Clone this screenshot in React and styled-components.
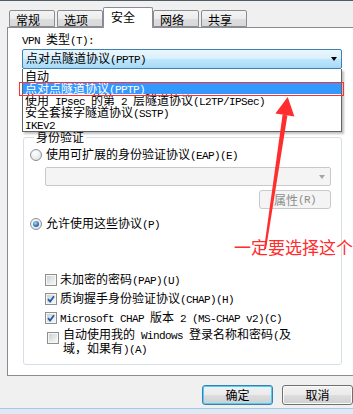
import React from "react";
import styled, { createGlobalStyle } from "styled-components";

const GlobalStyle = createGlobalStyle`
  html, body {
    margin: 0;
    padding: 0;
    overflow: hidden;
    background: #f0f0f0;
  }
  body {
    font-family: "Noto Sans CJK SC", "Liberation Sans", sans-serif;
    font-size: 12px;
    color: #000;
  }
`;

const Latin = styled.span`
  font-family: "Liberation Mono", "DejaVu Sans Mono", monospace;
  font-size: 11px;
  letter-spacing: -0.6px;
`;

// latin runs are narrow in the original bitmap font, so give them a mono face
const t = (s) =>
  s
    .split(/([\x20-\x7e]+)/)
    .filter(Boolean)
    .map((part, i) =>
      /^[\x20-\x7e]+$/.test(part) ? <Latin key={i}>{part}</Latin> : part
    );

const Window = styled.div`
  position: relative;
  width: 362px;
  height: 414px;
  box-sizing: border-box;
  border-top: 1px solid #4f5b66;
  background: #f0f0f0;
  display: flex;
  flex-direction: column;
`;

const TabRow = styled.div`
  display: flex;
  align-items: flex-end;
  gap: 2px;
  height: 26px;
  padding-left: 9px;
  position: relative;
  z-index: 1;
`;

const Tab = styled.div`
  box-sizing: border-box;
  width: ${(p) => (p.$active ? 50 : 46)}px;
  height: ${(p) => (p.$active ? 21 : 17)}px;
  margin: ${(p) => (p.$active ? "0 -2px -1px" : "0")};
  padding: ${(p) => (p.$active ? "3px 0 0 7px" : "3px 0 0 6px")};
  line-height: 12px;
  border: 1px solid #898c95;
  border-bottom: ${(p) => (p.$active ? "none" : "1px solid #898c95")};
  border-radius: 2px 2px 0 0;
  background: ${(p) =>
    p.$active ? "#fff" : "linear-gradient(#f4f4f4, #ececec 50%, #dddddd 51%, #d9d9d9)"};
`;

const Panel = styled.div`
  margin-left: 7px;
  height: 349px;
  box-sizing: border-box;
  border: 1px solid #898c95;
  background: #fff;
  padding: 5px 0 0 14px;
`;

const Label = styled.div`
  line-height: 12px;
  height: 12px;
`;

const ComboWrap = styled.div`
  position: relative;
  width: 320px;
  margin-top: 4px;
`;

const Combo = styled.div`
  box-sizing: border-box;
  height: 20px;
  border: 1px solid #3c7fb1;
  border-radius: 2px;
  background: linear-gradient(#eaf6fd, #d9f0fc 48%, #bee6fd 52%, #a7d9f5);
  display: flex;
  align-items: center;
  justify-content: space-between;
  padding: 0 4px 0 3px;
  line-height: 12px;
`;

const Arrow = styled.span`
  width: 0;
  height: 0;
  border-left: 3.5px solid transparent;
  border-right: 3.5px solid transparent;
  border-top: 4px solid ${(p) => (p.$disabled ? "#a5a5a5" : "#000")};
`;

const DropList = styled.div`
  position: absolute;
  top: 20px;
  left: 0;
  width: 320px;
  box-sizing: border-box;
  border: 1px solid #646464;
  border-top: none;
  background: #fff;
  padding: 1px 0;
  box-shadow: 2px 2px 2px rgba(0, 0, 0, 0.25);
  z-index: 2;
`;

const DropItem = styled.div`
  height: 12px;
  line-height: 12px;
  padding-left: 2px;
  white-space: nowrap;
  background: ${(p) => (p.$selected ? "#3399ff" : "transparent")};
  color: ${(p) => (p.$selected ? "#fff" : "#000")};
`;

const Group = styled.fieldset`
  margin: 61px 0 0 1px;
  width: 319px;
  box-sizing: border-box;
  border: 1px solid #d5dfe5;
  border-radius: 3px;
  padding: 4px 0 8px 6px;
  display: flex;
  flex-direction: column;
`;

const Legend = styled.legend`
  margin-left: 4px;
  padding: 0 2px;
  line-height: 14px;
  font-size: 12px;
`;

const Row = styled.label`
  display: flex;
  align-items: center;
  gap: ${(p) => (p.$gap ? p.$gap : 4)}px;
  height: 14px;
  line-height: 12px;
  margin-top: ${(p) => p.$top || 0}px;
  margin-left: ${(p) => p.$indent || 0}px;
  white-space: nowrap;
`;

const Radio = styled.span`
  position: relative;
  flex: none;
  width: 12px;
  height: 12px;
  box-sizing: border-box;
  border-radius: 50%;
  border: 1px solid #8c9096;
  background: radial-gradient(circle at 40% 35%, #ffffff 0%, #ececec 55%, #cfd1d4 100%);
  &::after {
    content: "";
    display: ${(p) => (p.$checked ? "block" : "none")};
    position: absolute;
    left: 2px;
    top: 2px;
    width: 6px;
    height: 6px;
    border-radius: 50%;
    background: radial-gradient(circle at 40% 35%, #a6d8fb, #2a6fb8 60%, #17457c);
  }
`;

const Box = styled.span`
  flex: none;
  width: 12px;
  height: 12px;
  box-sizing: border-box;
  border: 1px solid #8f8f8f;
  box-shadow: inset 0 0 0 1px #f6f6f6;
  background: linear-gradient(135deg, #c9cbce, #eeeeee 70%, #f8f8f8);
  display: flex;
  align-items: center;
  justify-content: center;
`;

const SubBlock = styled.div`
  display: flex;
  flex-direction: column;
  margin: 5px 10px 0 15px;
`;

const DisabledCombo = styled.div`
  box-sizing: border-box;
  height: 19px;
  border: 1px solid #c7c9cc;
  border-radius: 2px;
  background: #f4f4f4;
  display: flex;
  align-items: center;
  justify-content: flex-end;
  padding-right: 5px;
`;

const DisabledButton = styled.div`
  align-self: flex-end;
  margin-top: 4px;
  width: 72px;
  height: 19px;
  box-sizing: border-box;
  border: 1px solid #c7c9cc;
  border-radius: 3px;
  background: #f4f4f4;
  color: #8d8d8d;
  display: flex;
  align-items: center;
  justify-content: center;
  line-height: 12px;
`;

const TwoLine = styled.div`
  display: flex;
  gap: 4px;
  margin: 3px 0 0 17px;
  line-height: 12px;
`;

const TwoLineBox = styled(Box)`
  margin-top: 4px;
`;

const Buttons = styled.div`
  display: flex;
  justify-content: flex-end;
  gap: 9px;
  padding-right: 9px;
  margin-top: 9px;
`;

const Button = styled.div`
  width: 71px;
  height: 20px;
  box-sizing: border-box;
  border: 1px solid ${(p) => (p.$default ? "#3c7fb1" : "#707070")};
  border-radius: 3px;
  box-shadow: inset 0 0 0 1px ${(p) => (p.$default ? "#48d0f8" : "#fbfbfb")};
  background: linear-gradient(#f2f2f2, #ebebeb 48%, #dddddd 52%, #cfcfcf);
  display: flex;
  align-items: center;
  justify-content: center;
  line-height: 12px;
`;

const Footer = styled.div`
  margin-top: auto;
  height: 5px;
  border-top: 1px solid #a9c6e3;
  background: #dfe9f4;
`;

const Overlay = styled.svg`
  position: absolute;
  left: 0;
  top: -1px;
  pointer-events: none;
  z-index: 5;
`;

const Note = styled.div`
  position: absolute;
  left: 234px;
  top: 235px;
  font-size: 17px;
  line-height: 22px;
  color: #ff2d2d;
  white-space: nowrap;
  z-index: 5;
`;

const CheckMark = () => (
  <svg width="8" height="8" viewBox="0 0 8 8">
    <path d="M1 4.2 L3.1 6.5 L7 1.2" fill="none" stroke="#1f5ea8" strokeWidth="1.8" />
  </svg>
);

const items = [
  "自动",
  "点对点隧道协议(PPTP)",
  "使用 IPsec 的第 2 层隧道协议(L2TP/IPSec)",
  "安全套接字隧道协议(SSTP)",
  "IKEv2",
];

export default function App() {
  return (
    <>
      <GlobalStyle />
      <Window>
        <TabRow>
          <Tab>常规</Tab>
          <Tab>选项</Tab>
          <Tab $active>安全</Tab>
          <Tab>网络</Tab>
          <Tab>共享</Tab>
        </TabRow>
        <Panel>
          <Label>{t("VPN 类型(T):")}</Label>
          <ComboWrap>
            <Combo>
              <span>{t("点对点隧道协议(PPTP)")}</span>
              <Arrow />
            </Combo>
            <DropList>
              {items.map((it, i) => (
                <DropItem key={it} $selected={i === 1}>
                  {t(it)}
                </DropItem>
              ))}
            </DropList>
          </ComboWrap>
          <Group>
            <Legend>身份验证</Legend>
            <Row>
              <Radio />
              <span>{t("使用可扩展的身份验证协议(EAP)(E)")}</span>
            </Row>
            <SubBlock>
              <DisabledCombo>
                <Arrow $disabled />
              </DisabledCombo>
              <DisabledButton>{t("属性(R)")}</DisabledButton>
            </SubBlock>
            <Row $top={8}>
              <Radio $checked />
              <span>{t("允许使用这些协议(P)")}</span>
            </Row>
            <Row $top={42} $indent={15} $gap={3}>
              <Box />
              <span>{t("未加密的密码(PAP)(U)")}</span>
            </Row>
            <Row $top={5} $indent={15} $gap={3}>
              <Box>
                <CheckMark />
              </Box>
              <span>{t("质询握手身份验证协议(CHAP)(H)")}</span>
            </Row>
            <Row $top={5} $indent={15} $gap={3}>
              <Box>
                <CheckMark />
              </Box>
              <span>{t("Microsoft CHAP 版本 2 (MS-CHAP v2)(C)")}</span>
            </Row>
            <TwoLine>
              <TwoLineBox />
              <span>
                {t("自动使用我的 Windows 登录名称和密码(及")}
                <br />
                {t("域，如果有)(A)")}
              </span>
            </TwoLine>
          </Group>
        </Panel>
        <Buttons>
          <Button $default>确定</Button>
          <Button>取消</Button>
        </Buttons>
        <Footer />
        <Overlay width="353" height="414" viewBox="0 0 353 414">
          <rect x="19.5" y="82.5" width="324" height="13" fill="none" stroke="#ff3030" strokeWidth="1" />
          <polygon points="287.7,97 275.4,113.6 294.4,116.4" fill="#ff2d2d" />
          <polygon points="282.6,114.6 287.4,115.4 266,249 264,249" fill="#ff2d2d" />
        </Overlay>
        <Note>一定要选择这个</Note>
      </Window>
    </>
  );
}
